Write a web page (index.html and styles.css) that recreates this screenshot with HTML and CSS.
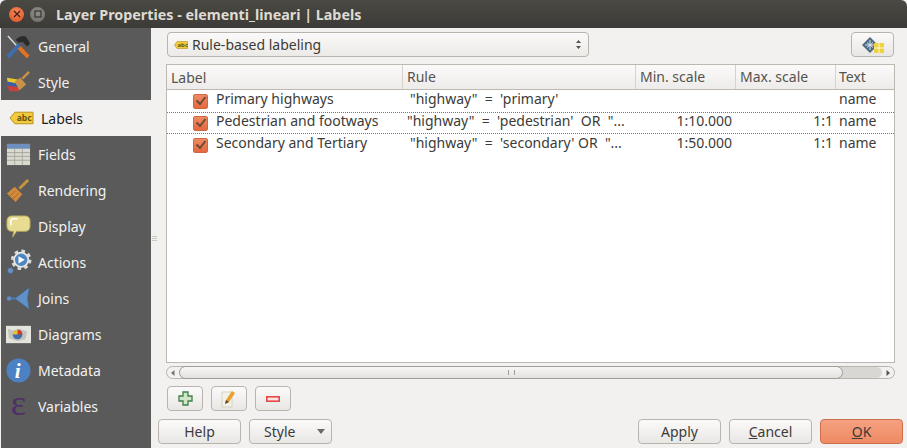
FILE: index.html
```html
<!DOCTYPE html>
<html lang="en">
<head>
    <meta charset="UTF-8">
    <title>Layer Properties - elementi_lineari | Labels</title>
    <link rel="stylesheet" href="styles.css">
</head>
<body>
<div class="window">
    <header class="titlebar">
        <span class="wbtn wbtn-close"><svg width="8" height="8" viewBox="0 0 8 8"><path d="M1 1l6 6M7 1l-6 6" stroke="#4a1f10" stroke-width="1.4"/></svg></span>
        <span class="wbtn wbtn-max"><svg width="8" height="8" viewBox="0 0 8 8"><rect x="1" y="1" width="6" height="6" fill="none" stroke="#3c3b37" stroke-width="1.3"/></svg></span>
        <span class="title">Layer Properties - elementi_lineari | Labels</span>
    </header>
    <div class="content">
        <nav class="sidebar">
            <div class="nav-item">
                <svg class="nav-icon" viewBox="0 0 26 26"><path d="M2 2l16 18" stroke="#d8dde0" stroke-width="1.500"/><path d="M2 24L14 11" stroke="#3d6fb0" stroke-width="4"/><path d="M10 6c3-3 8-5 11-3l4 7-3 3-5-5-4 1z" fill="#2b2b2b"/><path d="M14 14l9 10" stroke="#e8711c" stroke-width="4"/></svg>
                <span>General</span>
            </div>
            <div class="nav-item">
                <svg class="nav-icon" viewBox="0 0 26 26"><path d="M1 8l11 2 2 5H2z" fill="#e9c92b"/><path d="M1 12l11 2 2 4-13-1z" fill="#3a5fa8"/><path d="M1 16l12 2 1 4-10 0z" fill="#c8413a"/><path d="M9 12l6-4 6 7-7 6z" fill="#c99248"/><path d="M17 9l7-7" stroke="#c99248" stroke-width="2.500"/></svg>
                <span>Style</span>
            </div>
            <div class="nav-item nav-active">
                <svg class="nav-icon nav-icon-label" viewBox="0 0 26 14"><path d="M6 1h19v12H6L1 7z" fill="#f2cb3d" stroke="#b8901a"/><text x="8" y="10.500" class="abc-big">abc</text></svg>
                <span>Labels</span>
            </div>
            <div class="nav-item">
                <svg class="nav-icon" viewBox="-1 -2 26 26"><rect width="24" height="22" fill="#d9d9cf"/><rect width="24" height="5" fill="#6d8fbd"/><path d="M0 9h24M0 13h24M0 17h24M8 5v17M16 5v17" stroke="#a9a99f"/></svg>
                <span>Fields</span>
            </div>
            <div class="nav-item">
                <svg class="nav-icon" viewBox="0 0 26 26"><path d="M1 16l8-7 8 8-7 8z" fill="#d08a3a"/><path d="M4 19l6-6M7 22l6-6" stroke="#a96c27"/><path d="M14 11l9-9" stroke="#c9923f" stroke-width="3"/></svg>
                <span>Rendering</span>
            </div>
            <div class="nav-item">
                <svg class="nav-icon" viewBox="0 0 26 26"><path d="M6 2h14c3 0 5 2 5 5v6c0 3-2 5-5 5h-9l-4 6 1-6H6c-3 0-5-2-5-5V7c0-3 2-5 5-5z" fill="#e8dc92" stroke="#b9ab5c"/><path d="M5 12V8c0-2 1-3 3-3h4" stroke="#fff" stroke-width="1.500" fill="none"/></svg>
                <span>Display</span>
            </div>
            <div class="nav-item">
                <svg class="nav-icon" viewBox="0 0 28 28"><circle cx="17" cy="11" r="10" fill="none" stroke="#dcdcdc" stroke-width="3" stroke-dasharray="4 3.850"/><circle cx="17" cy="11" r="8" fill="#4f86bd" stroke="#e6e6e6" stroke-width="2"/><path d="M14 7l7 4-7 4z" fill="#fff"/><circle cx="5" cy="23" r="3.500" fill="#6d8fbd" stroke="#3f5f85"/></svg>
                <span>Actions</span>
            </div>
            <div class="nav-item">
                <svg class="nav-icon" viewBox="0 0 28 28"><path d="M3 14h8" stroke="#4f7fb5" stroke-width="2"/><circle cx="3.500" cy="14" r="2.500" fill="#5d8dc4"/><path d="M10 14L26 2l-2 12 2 12z" fill="#5f90c8" stroke="#3f6a9c" stroke-width=".6"/></svg>
                <span>Joins</span>
            </div>
            <div class="nav-item">
                <svg class="nav-icon" viewBox="0 0 26 18"><rect width="26" height="18" fill="#e4e4de"/><path d="M2 3l6 2 6-2 8 3-2 8-8 2-9-3z" fill="#c4c4ba"/><circle cx="12" cy="9" r="5" fill="#3f6fb0"/><path d="M12 9V4a5 5 0 0 1 5 5z" fill="#d23c2e"/><path d="M12 9l-5 0a5 5 0 0 1 5-5z" fill="#e6c534"/></svg>
                <span>Diagrams</span>
            </div>
            <div class="nav-item">
                <svg class="nav-icon" viewBox="0 0 26 26"><circle cx="13" cy="13" r="12.500" fill="#4c82c3"/><text x="9" y="21" class="info-i">i</text></svg>
                <span>Metadata</span>
            </div>
            <div class="nav-item">
                <svg class="nav-icon" viewBox="0 0 26 26"><text x="5" y="22" class="var-e">ε</text></svg>
                <span>Variables</span>
            </div>
        </nav>
        <div class="splitter"><i></i><i></i><i></i></div>
        <div class="right">
            <main class="main">
                <div class="toolrow">
                    <div class="combo">
                        <svg class="combo-icon" width="14" height="8" viewBox="0 0 14 8"><path d="M3 .5h10.500v7H3L.5 4z" fill="#f2cb3d" stroke="#b8901a" stroke-width=".6"/><text x="3.500" y="6" class="abc-small">abc</text></svg>
                        <span class="combo-text">Rule-based labeling</span>
                        <svg class="updown" width="7" height="11" viewBox="0 0 7 11"><path d="M3.500 1L6 4H1zM3.500 10L1 7h5z" fill="#55534e"/></svg>
                    </div>
                    <button class="btn btn-engine">
                        <svg width="24" height="16" viewBox="0 0 24 16"><path d="M9 0l8 8-8 8-8-8z" fill="#4f6c86"/><path d="M9 3v10M4 8h10M6 5.500l6 5M12 5.500l-6 5" stroke="#dfe6ec"/><rect x="13" y="6" width="10" height="10" rx="1" fill="#f0d23c"/><path d="M13 11h10M18 6v10" stroke="#fff" stroke-width=".8"/></svg>
                    </button>
                </div>
                <div class="table">
                    <div class="row head">
                        <div class="col c-label">Label</div>
                        <div class="col c-rule">Rule</div>
                        <div class="col c-min">Min. scale</div>
                        <div class="col c-max">Max. scale</div>
                        <div class="col c-text">Text</div>
                    </div>
                    <div class="row">
                        <div class="col c-label"><span class="check"><svg width="12" height="10" viewBox="0 0 12 10"><path d="M1.500 4.500L5 8l5.500-7" fill="none" stroke="#6e4a3a" stroke-width="2"/></svg></span>Primary highways</div>
                        <div class="col c-rule rule-in">"highway"  =  'primary'</div>
                        <div class="col c-min"></div>
                        <div class="col c-max"></div>
                        <div class="col c-text">name</div>
                    </div>
                    <div class="row row-focus">
                        <div class="col c-label"><span class="check"><svg width="12" height="10" viewBox="0 0 12 10"><path d="M1.500 4.500L5 8l5.500-7" fill="none" stroke="#6e4a3a" stroke-width="2"/></svg></span>Pedestrian and footways</div>
                        <div class="col c-rule">"highway"  =  'pedestrian'  OR  "...</div>
                        <div class="col c-min num">1:10.000</div>
                        <div class="col c-max num">1:1</div>
                        <div class="col c-text">name</div>
                    </div>
                    <div class="row">
                        <div class="col c-label"><span class="check"><svg width="12" height="10" viewBox="0 0 12 10"><path d="M1.500 4.500L5 8l5.500-7" fill="none" stroke="#6e4a3a" stroke-width="2"/></svg></span>Secondary and Tertiary</div>
                        <div class="col c-rule rule-in">"highway"  =  'secondary' OR  "...</div>
                        <div class="col c-min num">1:50.000</div>
                        <div class="col c-max num">1:1</div>
                        <div class="col c-text">name</div>
                    </div>
                </div>
                <div class="hscroll">
                    <span class="arrow"><svg width="4" height="6" viewBox="0 0 4 6"><path d="M3.500 0v6L0 3z" fill="#77756f"/></svg></span>
                    <div class="track">
                        <div class="thumb"><span class="grip"></span></div>
                    </div>
                    <span class="arrow"><svg width="4" height="6" viewBox="0 0 4 6"><path d="M.5 0v6L4 3z" fill="#55534e"/></svg></span>
                </div>
                <div class="rule-tools">
                    <button class="btn btn-small"><svg width="15" height="15" viewBox="0 0 15 15"><path d="M5 1h5v4h4v5h-4v4H5v-4H1V5h4z" fill="#cfe6c8" stroke="#3f7f45" stroke-width="1.300"/></svg></button>
                    <button class="btn btn-small"><svg width="16" height="18" viewBox="0 0 16 18"><path d="M1 2h10v15H1z" fill="#f4f1e6" stroke="#c9c6ba" stroke-width=".7"/><path d="M4 14l1-4 6-9 3 2-6 9z" fill="#e9a02c"/><path d="M4 14l1-4 3 2z" fill="#5c4a33"/></svg></button>
                    <button class="btn btn-small"><svg width="14" height="6" viewBox="0 0 14 6"><rect x=".8" y=".8" width="12.400" height="4.400" fill="#fbe3e1" stroke="#e2403c" stroke-width="1.500"/></svg></button>
                </div>
            </main>
            <footer class="footer">
                <div class="footer-group">
                    <button class="btn btn-wide">Help</button>
                    <button class="btn btn-wide btn-menu">Style<svg class="menu-arrow" width="8" height="5" viewBox="0 0 8 5"><path d="M0 0h8L4 5z" fill="#6b6963"/></svg></button>
                </div>
                <div class="footer-group">
                    <button class="btn btn-wide">Apply</button>
                    <button class="btn btn-wide"><u>C</u>ancel</button>
                    <button class="btn btn-wide btn-ok"><u>O</u>K</button>
                </div>
            </footer>
        </div>
    </div>
</div>
</body>
</html>
```

FILE: styles.css
```css
* {
    box-sizing: border-box;
}
html, body {
    margin: 0;
    height: 100%;
    overflow: hidden;
}
body {
    font-family: "Noto Sans", "Open Sans", sans-serif;
    font-size: 14px;
    color: #3c3b37;
}
.window {
    width: 907px;
    height: 448px;
    background-color: #f2f1f0;
    display: flex;
    flex-direction: column;
}
.titlebar {
    height: 28px;
    flex: none;
    background: linear-gradient(#4a4943, #3c3b37);
    border-radius: 6px 6px 0 0;
    display: flex;
    align-items: center;
    padding-left: 9px;
}
.wbtn {
    width: 15px;
    height: 15px;
    border-radius: 50%;
    display: flex;
    align-items: center;
    justify-content: center;
    margin-right: 6px;
}
.wbtn-close {
    background: radial-gradient(circle at 50% 35%, #f48a5c, #dc4f22);
}
.wbtn-max {
    background: radial-gradient(circle at 50% 35%, #8f8e88, #6e6d67);
}
.title {
    margin-left: 5px;
    font-weight: bold;
    font-size: 14.3px;
    color: #dfdbd2;
}
.content {
    flex: 1;
    display: flex;
    min-height: 0;
}
.sidebar {
    width: 150px;
    margin-left: 1px;
    background-color: #5a5a5a;
    flex: none;
}
.nav-item {
    height: 36px;
    display: flex;
    align-items: center;
    color: #f2f1f0;
    padding-left: 5px;
}
.nav-icon {
    width: 25px;
    height: 25px;
    flex: none;
    margin-right: 7px;
    overflow: visible;
}
.nav-active {
    background-color: #f2f1f0;
    color: #1b1b1b;
    margin-left: -1px;
    padding-left: 9px;
}
.nav-icon-label {
    width: 25px;
    height: 14px;
    margin-right: 7px;
}
.abc-big {
    font-size: 9px;
    font-weight: bold;
    fill: #6b5310;
}
.abc-small {
    font-size: 6px;
    font-weight: bold;
    fill: #6b5310;
}
.info-i {
    font-family: "Liberation Serif", serif;
    font-size: 22px;
    font-style: italic;
    font-weight: bold;
    fill: #fff;
}
.var-e {
    font-family: "Liberation Serif", serif;
    font-size: 38px;
    fill: #4f2f66;
}
.splitter {
    width: 5px;
    margin-left: 1px;
    display: flex;
    flex-direction: column;
    justify-content: center;
    gap: 1px;
    flex: none;
}
.splitter i {
    display: block;
    height: 1px;
    background-color: #c9c7c2;
}
.right {
    flex: 1;
    min-width: 0;
    display: flex;
    flex-direction: column;
}
.main {
    flex: 1;
    padding: 4px 0 0 9px;
    display: flex;
    flex-direction: column;
}
.toolrow {
    display: flex;
    justify-content: space-between;
    padding-left: 1px;
    margin-right: 13px;
    height: 25px;
}
.btn {
    font-family: inherit;
    font-size: 14px;
    color: #3c3b37;
    border: 1px solid #b8b5ae;
    border-radius: 4px;
    background: linear-gradient(#fbfafa, #e9e7e4);
    padding: 0;
    display: flex;
    align-items: center;
    justify-content: center;
}
.combo {
    width: 422px;
    height: 25px;
    border: 1px solid #b8b5ae;
    border-radius: 4px;
    background: linear-gradient(#fbfafa, #eceae7);
    display: flex;
    align-items: center;
    padding-left: 6px;
}
.combo-icon {
    margin-right: 4px;
}
.combo-text {
    flex: 1;
}
.updown {
    margin-right: 6px;
}
.btn-engine {
    width: 43px;
    height: 25px;
}
.table {
    margin-top: 7px;
    margin-right: 12px;
    height: 299px;
    background-color: #fff;
    border: 1px solid #bdb9b2;
}
.row {
    display: flex;
    height: 22px;
    align-items: center;
    white-space: pre;
}
.row .col {
    line-height: 18px;
    padding-bottom: 4px;
}
.head {
    height: 25px;
    background: linear-gradient(#fbfafa, #eeecea);
    border-bottom: 1px solid #bdb9b2;
    color: #55534e;
    align-items: flex-start;
}
.head .col {
    height: 24px;
    line-height: 23px;
    padding-bottom: 0;
    padding-left: 4px;
    border-right: 1px solid #d6d3cd;
}
.head .c-text {
    border-right: 0;
    padding-left: 3px;
}
.row-focus {
    border-top: 1px dotted #777;
    border-bottom: 1px dotted #777;
}
.col {
    overflow: hidden;
}
.c-label {
    width: 236px;
    display: flex;
    align-items: center;
}
.c-rule {
    width: 233px;
    padding-left: 4px;
}
.rule-in {
    padding-left: 7px;
}
.c-min {
    width: 100px;
}
.c-max {
    width: 100px;
}
.c-text {
    flex: 1;
    padding-left: 3px;
}
.c-min.num {
    padding-right: 4px;
}
.num {
    text-align: right;
    padding-right: 3px;
}
.check {
    width: 15px;
    height: 15px;
    margin: 4px 8px 0 26px;
    border-radius: 2px;
    background: linear-gradient(#f08a62, #e5693e);
    border: 1px solid #c96a45;
    display: flex;
    align-items: center;
    justify-content: center;
    flex: none;
}
.hscroll {
    margin-top: 3px;
    margin-right: 12px;
    height: 13px;
    display: flex;
    align-items: center;
    border: 1px solid #b8b5ae;
    border-radius: 7px;
    background-color: #f2f1f0;
}
.arrow {
    width: 12px;
    height: 11px;
    flex: none;
    display: flex;
    align-items: center;
    justify-content: center;
}
.track {
    flex: 1;
    height: 11px;
    background-color: #d9d7d3;
    border-radius: 6px;
}
.thumb {
    width: 664px;
    height: 13px;
    margin-top: -1px;
    border: 1px solid #a09d97;
    border-radius: 7px;
    background: linear-gradient(#f7f6f5, #e4e2df);
    display: flex;
    align-items: center;
    justify-content: center;
}
.grip {
    width: 7px;
    height: 5px;
    border-left: 1px solid #a09d97;
    border-right: 1px solid #a09d97;
}
.rule-tools {
    margin-top: 7px;
    padding-left: 1px;
    display: flex;
    gap: 8px;
}
.btn-small {
    width: 36px;
    height: 25px;
}
.footer {
    height: 25px;
    flex: none;
    margin: 0 4px 4px 1px;
    display: flex;
    justify-content: space-between;
}
.footer-group {
    display: flex;
    gap: 8px;
}
.btn-wide {
    width: 83px;
    height: 25px;
}
.btn-menu {
    justify-content: flex-start;
    padding-left: 14px;
}
.menu-arrow {
    margin-left: 22px;
}
.btn-ok {
    background: linear-gradient(#f5a182, #ef8a63);
    border-color: #c9704b;
}
```
